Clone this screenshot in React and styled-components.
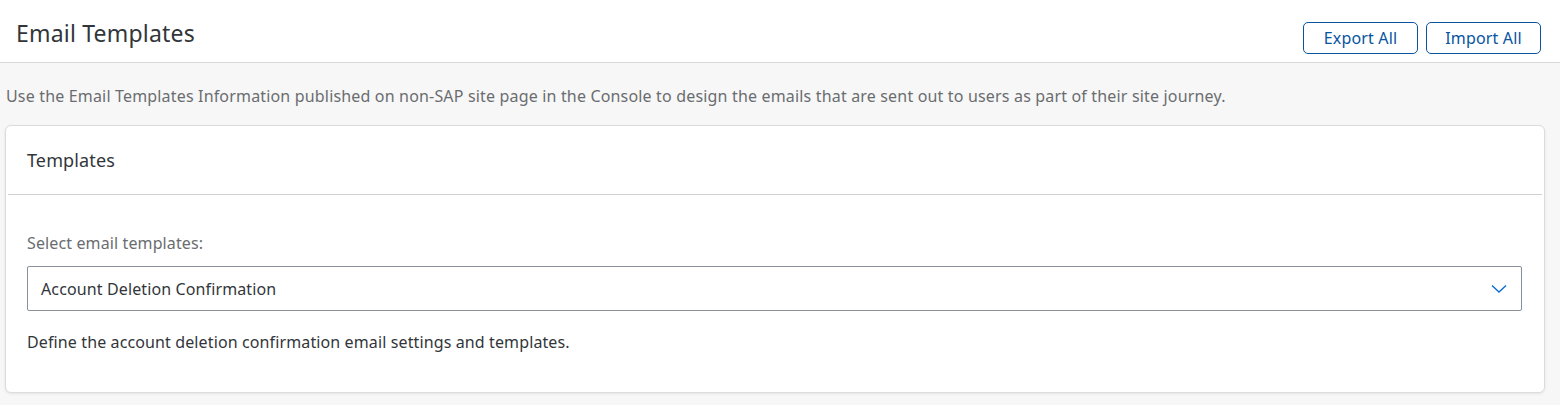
import React from 'react';
import styled, { createGlobalStyle } from 'styled-components';

const GlobalStyle = createGlobalStyle`
  body {
    margin: 0;
    background: #f7f7f7;
    font-family: "Noto Sans", "Open Sans", sans-serif;
    color: #32363a;
  }
`;

const Page = styled.div`
  width: 1560px;
  height: 405px;
  overflow: hidden;
  background: #f7f7f7;
  letter-spacing: 0.12px;
`;

const Header = styled.header`
  height: 62px;
  background: #fff;
  border-bottom: 1px solid #d9d9d9;
  display: flex;
  align-items: flex-start;
  justify-content: space-between;
  padding: 0 19px 0 16px;
`;

const Title = styled.h1`
  margin: 17px 0 0;
  font-size: 23px;
  font-weight: 400;
  color: #32363a;
  letter-spacing: 0.2px;
`;

const Actions = styled.div`
  display: flex;
  gap: 8px;
  margin-top: 22px;
`;

const Button = styled.button`
  width: 115px;
  height: 32px;
  border: 1px solid #0854a0;
  border-radius: 5px;
  background: #fff;
  color: #0854a0;
  font-family: inherit;
  font-size: 16px;
  letter-spacing: 0.15px;
  padding: 0;
`;

const Intro = styled.p`
  margin: 0;
  padding: 21px 6px 0;
  font-size: 16px;
  line-height: 24px;
  color: #6a6d70;
  letter-spacing: 0.17px;
`;

const Card = styled.section`
  margin: 17px 15px 0 5px;
  background: #fff;
  border: 1px solid #dcdcdc;
  border-radius: 6px;
  box-shadow: 0 1px 3px rgba(0, 0, 0, 0.08);
`;

const CardHeader = styled.div`
  height: 68px;
  display: flex;
  align-items: center;
  padding: 0 19px;
  margin: 0 2px;
  border-bottom: 1px solid #d0d0d0;
  font-size: 18px;
  color: #32363a;
`;

const CardBody = styled.div`
  padding: 37px 22px 38px 21px;
`;

const Label = styled.div`
  font-size: 16px;
  line-height: 22px;
  color: #6a6d70;
`;

const Select = styled.div`
  margin-top: 12px;
  height: 43px;
  border: 1px solid #89919a;
  border-radius: 2px;
  display: flex;
  align-items: center;
  justify-content: space-between;
  padding: 0 14px 0 13px;
  font-size: 16px;
  color: #32363a;
`;

const Hint = styled.p`
  margin: 19px 0 0;
  font-size: 16px;
  line-height: 24px;
  color: #32363a;
`;

function Chevron() {
  return (
    <svg width="16" height="10" viewBox="0 0 16 10">
      <path d="M1 1.5 L8 8 L15 1.5" fill="none" stroke="#0a6ed1" strokeWidth="1.4" />
    </svg>
  );
}

export default function App() {
  return (
    <Page>
      <GlobalStyle />
      <Header>
        <Title>Email Templates</Title>
        <Actions>
          <Button>Export All</Button>
          <Button>Import All</Button>
        </Actions>
      </Header>
      <Intro>
        Use the Email Templates Information published on non-SAP site page in the Console to design the emails that are sent out to users as part of their site journey.
      </Intro>
      <Card>
        <CardHeader>Templates</CardHeader>
        <CardBody>
          <Label>Select email templates:</Label>
          <Select>
            <span>Account Deletion Confirmation</span>
            <Chevron />
          </Select>
          <Hint>Define the account deletion confirmation email settings and templates.</Hint>
        </CardBody>
      </Card>
    </Page>
  );
}
